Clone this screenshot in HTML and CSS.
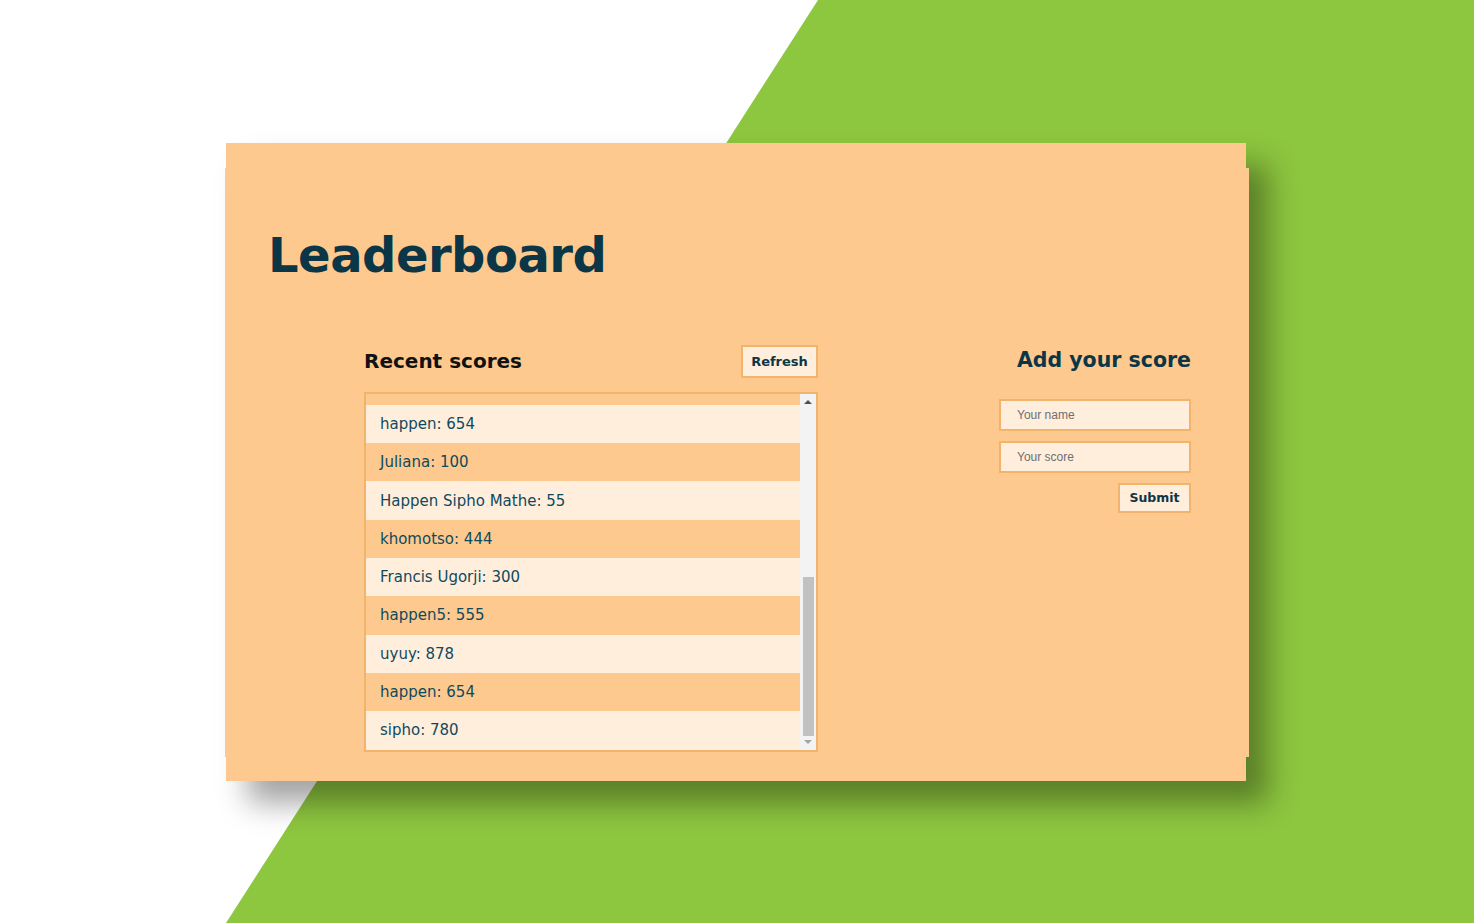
FILE: index.html
```html
<!DOCTYPE html>
<html lang="en">
<head>
<meta charset="utf-8">
<title>Leaderboard</title>
<link rel="stylesheet" href="styles.css">
</head>
<body>
<div class="backdrop"></div>
<main class="card">
  <h1 class="title">Leaderboard</h1>
  <div class="columns">
    <section class="scores">
      <div class="scores-head">
        <h2 class="scores-title">Recent scores</h2>
        <button class="btn btn-refresh" type="button">Refresh</button>
      </div>
      <div class="list-box">
        <ul class="list">
          <li class="row">happen: 999</li>
          <li class="row">happen: 654</li>
          <li class="row">Juliana: 100</li>
          <li class="row">Happen Sipho Mathe: 55</li>
          <li class="row">khomotso: 444</li>
          <li class="row">Francis Ugorji: 300</li>
          <li class="row">happen5: 555</li>
          <li class="row">uyuy: 878</li>
          <li class="row">happen: 654</li>
          <li class="row">sipho: 780</li>
        </ul>
        <div class="scrollbar">
          <span class="arrow arrow-up"></span>
          <div class="track"><div class="thumb"></div></div>
          <span class="arrow arrow-down"></span>
        </div>
      </div>
    </section>
    <section class="add">
      <h2 class="add-title">Add your score</h2>
      <form class="form">
        <input class="field" type="text" placeholder="Your name">
        <input class="field" type="text" placeholder="Your score">
        <button class="btn btn-submit" type="button">Submit</button>
      </form>
    </section>
  </div>
</main>
</body>
</html>
```

FILE: styles.css
```css
* { box-sizing: border-box; }

html, body {
  margin: 0;
  height: 100%;
}

body {
  background: #ffffff;
  display: flex;
  align-items: center;
  justify-content: center;
  font-family: "DejaVu Sans", "Noto Sans", sans-serif;
  overflow: hidden;
}

.backdrop {
  position: fixed;
  inset: 0;
  background: #8dc63f;
  clip-path: polygon(818px 0, 100% 0, 100% 100%, 226px 100%);
}

.card {
  position: relative;
  z-index: 1;
  width: 1020px;
  height: 638px;
  margin-right: 2px;
  background: #fdc98e;
  box-shadow: 22px 22px 28px rgba(0, 0, 0, 0.36);
  padding: 80px 55px 0 42px;
}

.card::before {
  content: "";
  position: absolute;
  top: 25px;
  bottom: 24px;
  left: -1px;
  right: -3px;
  background: #fdc98e;
  z-index: -1;
}

.title {
  margin: 0;
  font-size: 48px;
  line-height: 64px;
  font-weight: 700;
  color: #0b3647;
  letter-spacing: -0.5px;
}

.columns {
  display: flex;
  justify-content: space-between;
  align-items: flex-start;
  margin-top: 58px;
  padding-left: 96px;
}

.scores {
  width: 454px;
}

.scores-head {
  display: flex;
  justify-content: space-between;
  align-items: center;
  height: 33px;
  margin-bottom: 14px;
}

.scores-title {
  margin: 0;
  font-size: 20px;
  font-weight: 700;
  color: #111111;
}

.btn {
  font-family: "DejaVu Sans", "Noto Sans", sans-serif;
  font-weight: 700;
  color: #0b3647;
  background: #ffeedc;
  border: 2px solid #f0b46c;
  padding: 0;
  cursor: pointer;
}

.btn-refresh {
  width: 77px;
  height: 33px;
  font-size: 13px;
}

.list-box {
  display: flex;
  height: 360px;
  border: 2px solid #f0b46c;
  background: #fdc98e;
}

.list {
  flex: 1;
  margin: 0;
  padding: 0;
  list-style: none;
  display: flex;
  flex-direction: column;
  justify-content: flex-end;
  overflow: hidden;
}

.row {
  flex: none;
  height: 38.3px;
  display: flex;
  align-items: center;
  padding-left: 14px;
  font-size: 15px;
  color: #0f4a5d;
}

.row:nth-child(odd) {
  background: #fdc98e;
}

.row:nth-child(even) {
  background: #ffeedc;
}

.scrollbar {
  width: 16px;
  background: #f3f3f3;
  display: flex;
  flex-direction: column;
  align-items: center;
}

.arrow {
  flex: none;
  width: 0;
  height: 0;
  border-left: 4px solid transparent;
  border-right: 4px solid transparent;
}

.arrow-up {
  margin-top: 6px;
  border-bottom: 4px solid #505050;
}

.arrow-down {
  margin: 4px 0 6px;
  border-top: 4px solid #a3a3a3;
}

.track {
  flex: 1;
  width: 100%;
  display: flex;
  flex-direction: column;
  justify-content: flex-end;
  align-items: center;
}

.thumb {
  width: 11px;
  height: 159px;
  background: #c1c1c1;
}

.add {
  width: 192px;
  display: flex;
  flex-direction: column;
  align-items: flex-end;
}

.add-title {
  margin: 0;
  height: 33px;
  line-height: 31px;
  font-size: 20.5px;
  font-weight: 700;
  color: #0b3647;
  white-space: nowrap;
}

.form {
  width: 100%;
  display: flex;
  flex-direction: column;
  align-items: flex-end;
  gap: 10px;
  margin-top: 21px;
}

.field {
  width: 100%;
  height: 32px;
  border: 2px solid #f0b46c;
  background: #ffeedc;
  padding: 0 0 0 16px;
  font-family: "Liberation Sans", Arial, sans-serif;
  font-size: 12px;
  color: #333;
  outline: none;
}

.field::placeholder {
  color: #6f6f6f;
}

.btn-submit {
  width: 73px;
  height: 30px;
  font-size: 12.5px;
}
```
